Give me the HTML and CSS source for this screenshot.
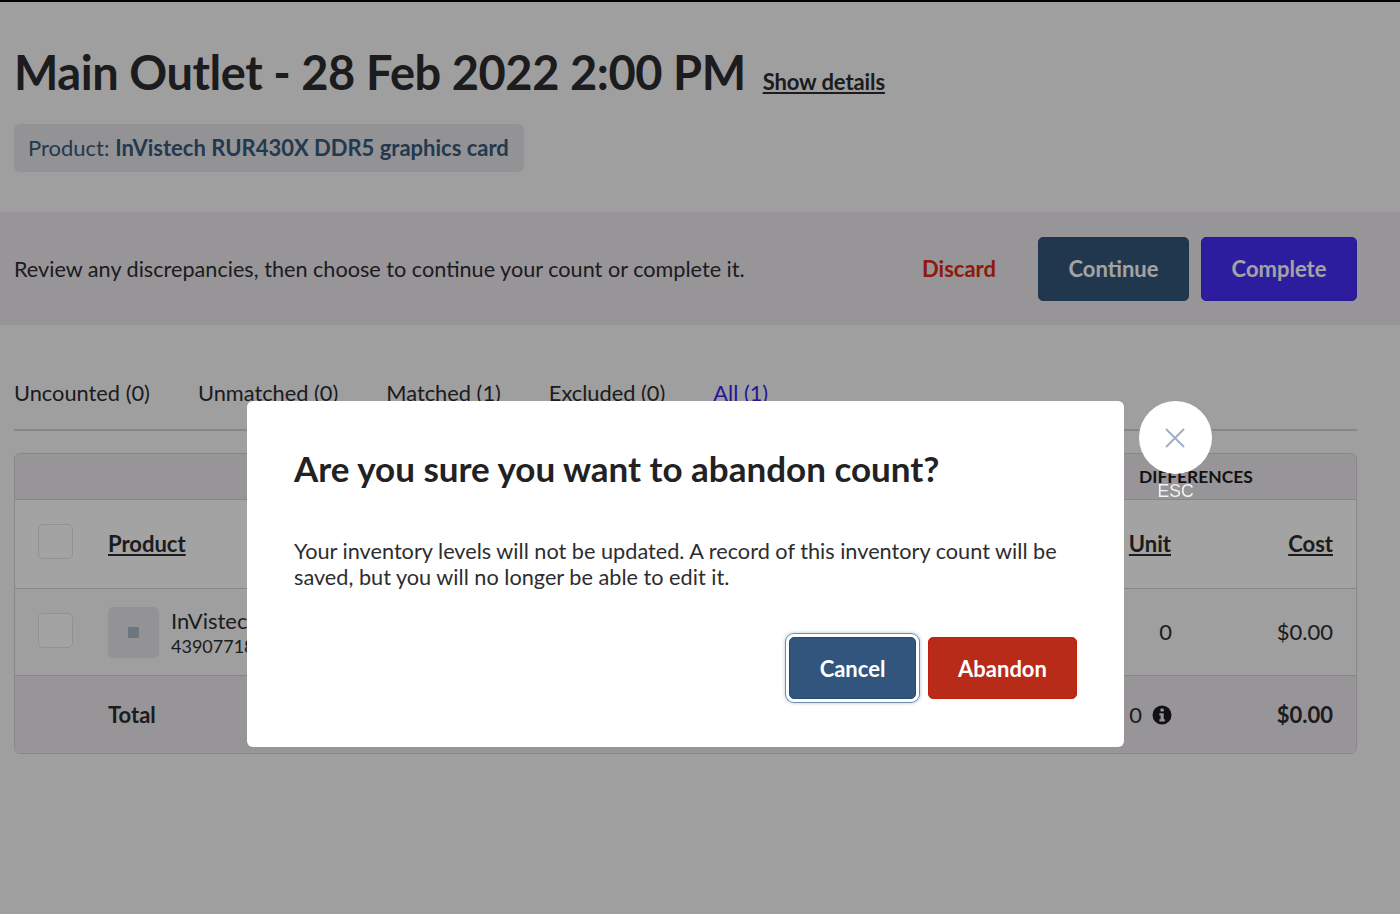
FILE: index.html
```html
<!DOCTYPE html>
<html lang="en">
<head>
    <meta charset="UTF-8">
    <title>Main Outlet - 28 Feb 2022 2:00 PM</title>
    <link rel="stylesheet" href="styles.css">
</head>
<body>
    <div class="page">
        <div class="top">
            <div class="title-row">
                <h1>Main Outlet - 28 Feb 2022 2:00 PM</h1>
                <a href="#" class="show-details">Show details</a>
            </div>
            <div class="filter-chip">Product: <strong>InVistech RUR430X DDR5 graphics card</strong></div>
        </div>

        <div class="action-bar">
            <p>Review any discrepancies, then choose to continue your count or complete it.</p>
            <a href="#" class="discard">Discard</a>
            <button class="btn btn-continue">Continue</button>
            <button class="btn btn-complete">Complete</button>
        </div>

        <div class="content">
            <div class="tabs">
                <a href="#">Uncounted (0)</a>
                <a href="#">Unmatched (0)</a>
                <a href="#">Matched (1)</a>
                <a href="#">Excluded (0)</a>
                <a href="#" class="active">All (1)</a>
            </div>

            <div class="count-table">
                <div class="row group-row">
                    <span class="group-label">DIFFERENCES</span>
                </div>
                <div class="row head-row">
                    <span class="checkbox"></span>
                    <a href="#" class="col-product">Product</a>
                    <a href="#" class="col-unit">Unit</a>
                    <a href="#" class="col-cost">Cost</a>
                </div>
                <div class="row item-row">
                    <span class="checkbox checkbox-light"></span>
                    <div class="col-product product-cell">
                        <div class="thumb"><span class="thumb-icon"></span></div>
                        <div>
                            <div class="product-name">InVistech RUR430X DDR5 graphics card</div>
                            <div class="product-sku">43907718</div>
                        </div>
                    </div>
                    <span class="col-unit">0</span>
                    <span class="col-cost">$0.00</span>
                </div>
                <div class="row total-row">
                    <span class="col-product">Total</span>
                    <span class="col-unit total-unit">
                        <span>0</span>
                        <svg class="info-icon" viewBox="0 0 20 20" width="20" height="20">
                            <circle cx="10" cy="10" r="9.5" fill="#1c1c1e"/>
                            <rect x="8.4" y="3.6" width="3.4" height="3" rx="0.8" fill="#ece9ed"/>
                            <path d="M7.4 8.2h4.3v6h1.2v2.2H7.4v-2.2h1.2v-3.8H7.4z" fill="#ece9ed"/>
                        </svg>
                    </span>
                    <span class="col-cost">$0.00</span>
                </div>
            </div>
        </div>
    </div>

    <div class="overlay">
        <div class="modal">
            <h2>Are you sure you want to abandon count?</h2>
            <p>Your inventory levels will not be updated. A record of this inventory count will be saved, but you will no longer be able to edit it.</p>
            <div class="modal-actions">
                <button class="btn btn-cancel">Cancel</button>
                <button class="btn btn-abandon">Abandon</button>
            </div>
        </div>
        <div class="close-wrap">
            <button class="close-btn" aria-label="Close">
                <svg viewBox="0 0 22 22" width="22" height="22">
                    <path d="M2 2l18 18M20 2L2 20" stroke="#9db0c6" stroke-width="2" fill="none"/>
                </svg>
            </button>
            <span class="esc">ESC</span>
        </div>
    </div>
</body>
</html>
```

FILE: styles.css
```css
* {
    box-sizing: border-box;
}
body {
    margin: 0;
    font-family: Lato, "Open Sans", sans-serif;
    color: #2d2d30;
    background-color: #f9f9f9;
    overflow: hidden;
}
a {
    color: inherit;
}
.page {
    height: 914px;
    border-top: 2px solid #000000;
}
.top {
    padding: 39px 14px 40px;
}
.title-row {
    display: flex;
    align-items: baseline;
    gap: 17px;
}
h1 {
    margin: 0;
    font-size: 47px;
    line-height: 62px;
    font-weight: 700;
    letter-spacing: -0.45px;
}
.show-details {
    font-size: 22px;
    font-weight: 700;
    letter-spacing: -0.1px;
}
.filter-chip {
    display: inline-block;
    margin-top: 21px;
    padding: 0 15px 0 14px;
    height: 48px;
    line-height: 48px;
    font-size: 22px;
    border-radius: 6px;
    color: #37597c;
    background-color: #e6e4e9;
}
.filter-chip strong {
    font-weight: 700;
}
.action-bar {
    display: flex;
    align-items: center;
    height: 113px;
    padding: 0 43px 0 14px;
    background-color: #ece9ee;
}
.action-bar p {
    flex: 1;
    margin: 0;
    font-size: 21.65px;
}
.discard {
    margin-right: 42px;
    font-size: 22px;
    font-weight: 700;
    text-decoration: none;
    color: #df2a13;
}
.btn {
    height: 64px;
    border-radius: 5px;
    font-family: inherit;
    font-size: 22px;
    font-weight: 700;
    color: #ffffff;
    cursor: pointer;
}
.btn-continue {
    width: 151px;
    margin-right: 12px;
    border: 1px solid #2f5278;
    background-color: #35577b;
}
.btn-complete {
    width: 156px;
    border: 1px solid #3d25f0;
    background-color: #452df7;
}
.content {
    padding: 53px 43px 0 14px;
}
.tabs {
    display: flex;
    gap: 48px;
    height: 53px;
    border-bottom: 2px solid #d4d4d4;
    font-size: 21.8px;
}
.tabs a {
    text-decoration: none;
    line-height: 30px;
}
.tabs a.active {
    color: #3a22f0;
}
.count-table {
    margin-top: 22px;
    border: 1px solid #d4d4d6;
    border-radius: 6px;
    overflow: hidden;
}
.row {
    display: flex;
    align-items: center;
    padding: 0 23px;
    font-size: 22px;
}
.group-row {
    height: 46px;
    background-color: #ece9ee;
    border-bottom: 1px solid #d4d4d6;
}
.group-label {
    margin-left: 1101px;
    font-size: 17.4px;
    font-weight: 700;
    color: #1c1c1e;
}
.head-row {
    height: 89px;
    padding-bottom: 2px;
    border-bottom: 1px solid #d4d4d6;
    font-weight: 700;
    background-color: #ffffff;
}
.item-row {
    height: 87px;
    border-bottom: 1px solid #d4d4d6;
}
.total-row {
    height: 77px;
    font-weight: 700;
    background-color: #ece9ee;
}
.checkbox {
    flex: none;
    width: 35px;
    height: 35px;
    margin-bottom: 3px;
    border: 1px solid #e3e3e6;
    border-radius: 5px;
    background-color: #ffffff;
}
.checkbox-light {
    margin-bottom: 4px;
}
.col-product {
    margin-left: 35px;
    flex: 1;
}
.total-row .col-product {
    margin-left: 70px;
}
.col-unit {
    width: 160px;
    text-align: right;
}
.col-cost {
    width: 162px;
    text-align: right;
}
.product-cell {
    display: flex;
    align-items: center;
    gap: 12px;
    font-weight: 400;
}
.thumb {
    display: flex;
    align-items: center;
    justify-content: center;
    width: 51px;
    height: 51px;
    border-radius: 5px;
    background-color: #e6e6ea;
}
.thumb-icon {
    width: 11px;
    height: 11px;
    background-color: #a9bcc9;
}
.product-name {
    line-height: 28px;
}
.product-sku {
    font-size: 18px;
    line-height: 22px;
}
.item-row .col-unit {
    margin-right: -1px;
    margin-bottom: 2px;
}
.item-row .col-cost {
    margin-bottom: 2px;
}
.total-unit {
    display: flex;
    justify-content: flex-end;
    align-items: center;
    gap: 10px;
    font-weight: 400;
    margin-right: -1px;
}
.info-icon {
    display: block;
}

/* modal */
.overlay {
    position: fixed;
    top: 0;
    left: 0;
    right: 0;
    bottom: 0;
    display: flex;
    align-items: flex-start;
    gap: 15px;
    padding: 401px 0 0 247px;
    background-color: rgba(0, 0, 0, 0.36);
}
.modal {
    width: 877px;
    height: 346px;
    padding: 45px 47px 0;
    border-radius: 6px;
    background-color: #ffffff;
}
.modal h2 {
    margin: 0;
    font-size: 35px;
    line-height: 44px;
    font-weight: 700;
    color: #222224;
}
.modal p {
    margin: 48px 0 0;
    font-size: 21.7px;
    line-height: 26px;
}
.modal-actions {
    display: flex;
    justify-content: flex-end;
    gap: 12px;
    margin-top: 47px;
}
.btn-cancel {
    width: 127px;
    height: 62px;
    border: 1px solid #294a6e;
    background-color: #31557c;
    box-shadow: 0 0 0 3px #ffffff, 0 0 0 4px #6f8db0, 0 0 3px 5px #cfdbe8;
}
.btn-abandon {
    width: 149px;
    height: 62px;
    border: 1px solid #c41f0c;
    background-color: #b92b19;
}
.close-wrap {
    display: flex;
    flex-direction: column;
    align-items: center;
    width: 73px;
}
.close-btn {
    display: flex;
    align-items: center;
    justify-content: center;
    width: 73px;
    height: 73px;
    padding: 0 1px 0 0;
    border: none;
    border-radius: 50%;
    background-color: #ffffff;
}
.esc {
    margin-top: 7px;
    font-family: "Liberation Sans", Arial, sans-serif;
    font-size: 17.6px;
    line-height: 20px;
    color: #f2f2f2;
}
```
